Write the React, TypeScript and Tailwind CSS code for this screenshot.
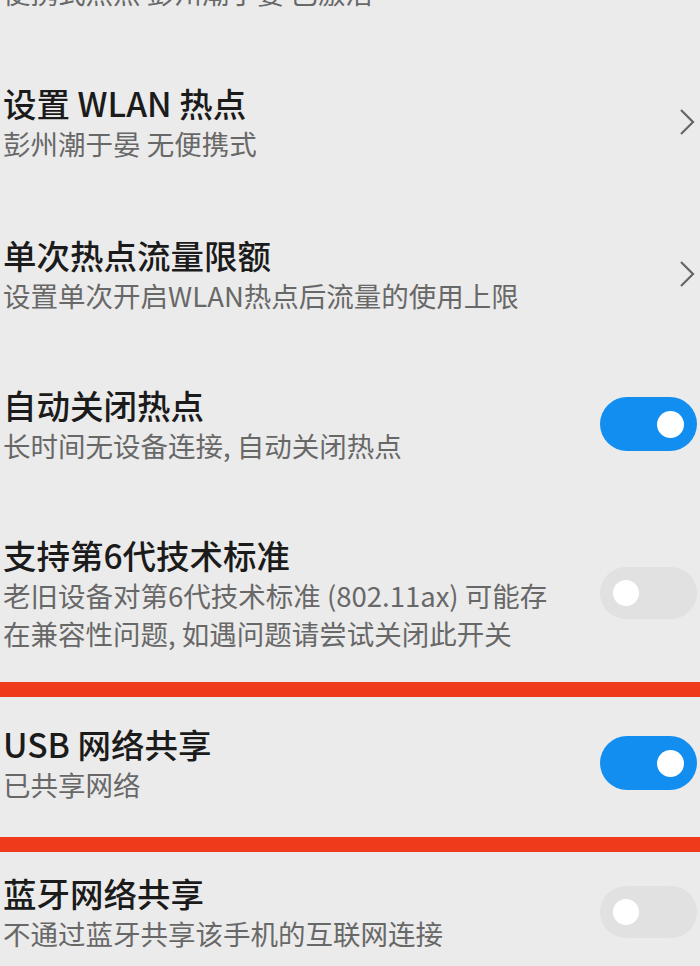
import React from "react";

const font = { fontFamily: '"Noto Sans CJK SC", "Noto Sans", sans-serif' };

function Toggle({ on }: { on: boolean }) {
  return on ? (
    <div className="relative h-[54px] w-[97px] shrink-0 rounded-full bg-[#128ef0]">
      <div className="absolute right-[13px] top-[14px] h-[27px] w-[27px] rounded-full bg-white" />
    </div>
  ) : (
    <div className="relative h-[52px] w-[97px] shrink-0 rounded-full bg-[#e1e1e1]">
      <div className="absolute left-[13px] top-[13px] h-[26px] w-[26px] rounded-full bg-white" />
    </div>
  );
}

function Chevron() {
  return (
    <svg width="16" height="28" viewBox="0 0 16 28" className="shrink-0 mr-[2px]">
      <path d="M2 2 L14 14 L2 26" fill="none" stroke="#666666" strokeWidth="2.2" strokeLinejoin="miter" />
    </svg>
  );
}

function Row({
  title,
  sub,
  right,
  className,
}: {
  title: string;
  sub: React.ReactNode;
  right?: React.ReactNode;
  className?: string;
}) {
  return (
    <div className={"flex items-center justify-between pl-[3px] pr-[3px] " + (className ?? "")}>
      <div className="flex flex-col">
        <div className="text-[33.5px] leading-[42px] font-medium text-[#1b1b1b]">{title}</div>
        <div className="text-[27.5px] leading-[38px] text-[#686868]">{sub}</div>
      </div>
      {right}
    </div>
  );
}

export default function App() {
  return (
    <div className="h-[966px] w-[700px] overflow-hidden bg-[#ebebeb]" style={font}>
      <div className="flex flex-col">
        <Row
          className="mt-[-69px]"
          title="便携式热点"
          sub="便携式热点  彭州潮于晏  已激活"
          right={<Toggle on={false} />}
        />
        <Row className="mt-[71px]" title="设置 WLAN 热点" sub="彭州潮于晏 无便携式" right={<Chevron />} />
        <Row
          className="mt-[72px]"
          title="单次热点流量限额"
          sub="设置单次开启WLAN热点后流量的使用上限"
          right={<Chevron />}
        />
        <Row
          className="mt-[70px]"
          title="自动关闭热点"
          sub="长时间无设备连接, 自动关闭热点"
          right={<Toggle on={true} />}
        />
        <Row
          className="mt-[70px]"
          title="支持第6代技术标准"
          sub={
            <>
              老旧设备对第6代技术标准 (802.11ax) 可能存
              <br />
              在兼容性问题, 如遇问题请尝试关闭此开关
            </>
          }
          right={<Toggle on={false} />}
        />
        <div className="mt-[30px] h-[15px] w-full bg-[#ef3a1b]" />
        <Row className="mt-[26px]" title="USB 网络共享" sub="已共享网络" right={<Toggle on={true} />} />
        <div className="mt-[34px] h-[15px] w-full bg-[#ef3a1b]" />
        <Row
          className="mt-[20px]"
          title="蓝牙网络共享"
          sub="不通过蓝牙共享该手机的互联网连接"
          right={<Toggle on={false} />}
        />
      </div>
    </div>
  );
}
